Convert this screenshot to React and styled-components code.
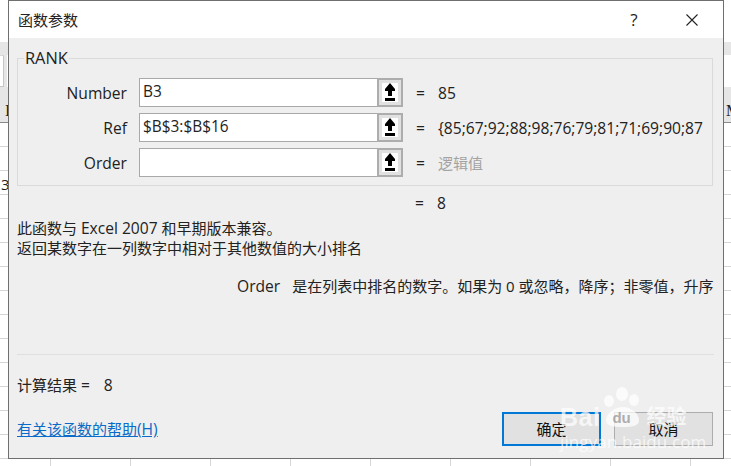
import React from "react";
import styled, { createGlobalStyle } from "styled-components";

const UI_FONT = `"Open Sans", "Noto Sans CJK SC", sans-serif`;

const Global = createGlobalStyle`
  html, body { margin: 0; padding: 0; background: #fff; }
  * { box-sizing: border-box; }
`;

const Page = styled.div`
  position: relative;
  width: 731px;
  height: 466px;
  overflow: hidden;
  background: #fff;
  font-family: ${UI_FONT};
  font-size: 15px;
  color: #111;
`;

const Latin = styled.span`
  font-size: 15.6px;
`;

/* ---------- spreadsheet behind the dialog ---------- */
const Sheet = styled.div`
  display: flex;
  flex-direction: column;
  width: 100%;
  height: 100%;
`;
const SheetTop = styled.div`
  height: 42px;
  flex: none;
`;
const FormulaBar = styled.div`
  height: 45px;
  flex: none;
  display: flex;
  gap: 3px;
  padding-top: 13px;
  background: #e6e6e6;
`;
const NameBox = styled.div`
  width: 4px;
  background: #fff;
  border-right: 1px solid #c6c6c6;
  border-top: 1px solid #d8d8d8;
  border-bottom: 1px solid #c6c6c6;
`;
const FormulaField = styled.div`
  flex: 1;
  background: #fff;
`;
const ColumnHeads = styled.div`
  height: 36px;
  flex: none;
  display: flex;
  justify-content: space-between;
  align-items: flex-end;
  padding: 0 0 2px 5px;
  background: #e6e6e6;
  border-bottom: 1px solid #8a8a8a;
  font: 16px "Liberation Serif", serif;
  color: #222;
`;
const HeadLetter = styled.span`
  width: ${(p) => p.$w}px;
  overflow: hidden;
`;
const SheetRow = styled.div`
  height: 24px;
  flex: none;
  padding: 3px 0 0 1px;
  border-bottom: 1px solid #d6d6d6;
  font-size: 15px;
  line-height: 20px;
  color: #222;
`;
const TickRow = styled.div`
  flex: 1;
  background-image: linear-gradient(to right, #d6d6d6 0 1px, transparent 1px);
  background-size: 80px 100%;
  background-position: 50px 0;
`;

/* ---------- dialog ---------- */
const Dialog = styled.section`
  position: absolute;
  left: 8px;
  top: 0;
  width: 716px;
  height: 459px;
  display: flex;
  flex-direction: column;
  background: #efefef;
  border: 1px solid #6f6f6f;
`;
const TitleBar = styled.header`
  height: 37px;
  flex: none;
  display: flex;
  align-items: center;
  padding: 0 25px 0 9px;
  background: #fff;
`;
const Title = styled.h1`
  flex: 1;
  margin: 0;
  font: 400 15px/20px ${UI_FONT};
  color: #222;
`;
const HelpGlyph = styled.span`
  width: 12px;
  margin-right: 46px;
  font-size: 17px;
  line-height: 20px;
  text-align: center;
  color: #222;
`;
const CloseButton = styled.button`
  width: 12px;
  height: 12px;
  padding: 0;
  display: block;
  border: 0;
  background: none;
`;
const Body = styled.div`
  flex: 1;
  display: flex;
  flex-direction: column;
  padding: 12px 9px 12px 8px;
  min-height: 0;
`;
const ArgsBox = styled.fieldset`
  flex: none;
  margin: 0;
  padding: 12px 8px 7px 0;
  height: 136px;
  width: 696px;
  border: 1px solid #dadada;
  display: grid;
  grid-template-columns: 110px 264px 1fr;
  grid-auto-rows: 29px;
  row-gap: 6px;
  align-content: start;
`;
const Legend = styled.legend`
  margin-left: 6px;
  padding: 0 1px;
  font-size: 16.4px;
  line-height: 16px;
  color: #222;
`;
const ArgLabel = styled.label`
  padding: 1px 1px 0 0;
  text-align: right;
  font-size: 15.6px;
  line-height: 29px;
  color: #222;
`;
const RefField = styled.div`
  margin-left: 11px;
  display: flex;
  border: 1px solid #a9a9a9;
  border-width: 1px 0 1px 1px;
  background: #fff;
  width: 264px;
`;
const FieldText = styled.div`
  flex: 1;
  padding-left: 3px;
  font-size: 15.4px;
  line-height: 26px;
  color: #222;
`;
const PickButton = styled.button`
  flex: none;
  width: 26px;
  margin: -1px 0;
  padding: 3px;
  border: 2px solid #adadad;
  background: #e1e1e1;
  display: flex;
`;
const PickFace = styled.span`
  flex: 1;
  background: #fff;
  display: flex;
  align-items: center;
  justify-content: center;
`;
const Evaluated = styled.div`
  display: flex;
  margin-left: 24px;
  padding-top: 1px;
  font-size: ${(p) => (p.$muted ? "15px" : "15.6px")};
  line-height: 28px;
  color: ${(p) => (p.$muted ? "#a3a3a3" : "#222")};
  white-space: nowrap;
  overflow: hidden;
`;
const Equals = styled.span`
  width: 22px;
  flex: none;
  font-size: 15.6px;
  color: #222;
`;
const ResultLine = styled.div`
  margin: 7px 0 0 398px;
  display: flex;
  font-size: 15.6px;
  line-height: 20px;
  color: #222;
`;
const Description = styled.p`
  margin: 5px 0 0 0;
  line-height: 20px;
  color: #222;
`;
const ArgHelp = styled.div`
  margin: 18px 0 0 220px;
  display: flex;
  gap: 12px;
  width: 478px;
  white-space: nowrap;
  line-height: 20px;
  color: #222;
`;
const Divider = styled.hr`
  width: 697px;
  margin: 58px 0 0 0;
  border: 0;
  border-top: 1px solid #dfdfdf;
`;
const Total = styled.div`
  margin-top: 20px;
  display: flex;
  gap: 14px;
  line-height: 20px;
  color: #222;
`;
const Footer = styled.footer`
  margin-top: auto;
  display: flex;
  align-items: center;
  justify-content: space-between;
  width: 696px;
`;
const HelpLink = styled.a`
  color: #0b6bc8;
  text-decoration: underline;
`;
const Buttons = styled.div`
  display: flex;
  gap: 13px;
`;
const Action = styled.button`
  width: 99px;
  height: 34px;
  padding: 0 0 2px;
  background: #e1e1e1;
  border: ${(p) => (p.$primary ? "2px solid #0078d7" : "1px solid #adadad")};
  font: 15px ${UI_FONT};
  color: #111;
`;

/* ---------- watermark ---------- */
const Watermark = styled.div`
  position: absolute;
  left: 560px;
  top: 386px;
  width: 135px;
  height: 62px;
  color: rgba(255, 255, 255, 0.72);
  pointer-events: none;
`;
const WatermarkRow = styled.div`
  display: flex;
  align-items: flex-end;
  height: 43px;
`;
const WmBai = styled.span`
  margin-bottom: -2px;
  font: 700 25px/28px "Liberation Sans", sans-serif;
  letter-spacing: 0.5px;
`;
const WmPaw = styled.div`
  position: relative;
  width: 46px;
  height: 43px;
  flex: none;
`;
const WmPawArt = styled.svg`
  display: block;
  width: 46px;
  height: 43px;
`;
const WmDu = styled.span`
  position: absolute;
  left: 12px;
  bottom: 2px;
  font: 700 15px/18px "Liberation Sans", sans-serif;
  color: rgba(140, 140, 140, 0.7);
`;
const WmJing = styled.span`
  margin-left: 0;
  font: 700 20px/26px "Noto Sans CJK SC", sans-serif;
`;
const WmDomain = styled.div`
  margin-top: 3px;
  font: 17px/19px "Open Sans", sans-serif;
  letter-spacing: 0.1px;
  white-space: nowrap;
`;

const Arrow = () => (
  <svg width="10" height="19" viewBox="0 0 10 19">
    <path d="M5 0 L10 6 V8 H7 V13 H3 V8 H0 V6 Z M0 15 H10 V18 H0 Z" fill="#000" />
  </svg>
);

const rows = [
  { label: "Number", text: "B3", value: "85" },
  { label: "Ref", text: "$B$3:$B$16", value: "{85;67;92;88;98;76;79;81;71;69;90;87" },
  { label: "Order", text: "", value: "逻辑值", muted: true },
];

export default function App() {
  return (
    <Page>
      <Global />
      <Sheet>
        <SheetTop />
        <FormulaBar>
          <NameBox />
          <FormulaField />
        </FormulaBar>
        <ColumnHeads>
          <HeadLetter $w={4}>I</HeadLetter>
          <HeadLetter $w={5}>M</HeadLetter>
        </ColumnHeads>
        {Array.from({ length: 14 }, (_, i) => (
          <SheetRow key={i}>{i === 2 ? "3" : ""}</SheetRow>
        ))}
        <TickRow />
      </Sheet>

      <Dialog>
        <TitleBar>
          <Title>函数参数</Title>
          <HelpGlyph>?</HelpGlyph>
          <CloseButton aria-label="关闭">
            <svg width="12" height="12" viewBox="0 0 12 12">
              <path d="M0.5 0.5 L11.5 11.5 M11.5 0.5 L0.5 11.5" stroke="#222" strokeWidth="1.1" fill="none" />
            </svg>
          </CloseButton>
        </TitleBar>
        <Body>
          <ArgsBox>
            <Legend>RANK</Legend>
            {rows.map((r) => (
              <React.Fragment key={r.label}>
                <ArgLabel>{r.label}</ArgLabel>
                <RefField>
                  <FieldText>{r.text}</FieldText>
                  <PickButton aria-label="选择">
                    <PickFace>
                      <Arrow />
                    </PickFace>
                  </PickButton>
                </RefField>
                <Evaluated $muted={r.muted}>
                  <Equals>=</Equals>
                  <span>{r.value}</span>
                </Evaluated>
              </React.Fragment>
            ))}
          </ArgsBox>
          <ResultLine>
            <Equals>=</Equals>
            <span>8</span>
          </ResultLine>
          <Description>
            此函数与 <Latin>Excel 2007</Latin> 和早期版本兼容。
            <br />
            返回某数字在一列数字中相对于其他数值的大小排名
          </Description>
          <ArgHelp>
            <Latin>Order</Latin>
            <span>是在列表中排名的数字。如果为 0 或忽略，降序；非零值，升序</span>
          </ArgHelp>
          <Divider />
          <Total>
            <span>计算结果 <Latin>=</Latin></span>
            <Latin>8</Latin>
          </Total>
          <Footer>
            <HelpLink>有关该函数的帮助<Latin>(H)</Latin></HelpLink>
            <Buttons>
              <Action $primary>确定</Action>
              <Action>取消</Action>
            </Buttons>
          </Footer>
        </Body>
      </Dialog>

      <Watermark>
        <WatermarkRow>
          <WmBai>Bai</WmBai>
          <WmPaw>
            <WmPawArt viewBox="0 0 46 43">
              <ellipse cx="9" cy="15" rx="5" ry="6" fill="currentColor" />
              <ellipse cx="22" cy="8" rx="6" ry="7" fill="currentColor" />
              <ellipse cx="34" cy="14" rx="5" ry="6" fill="currentColor" />
              <path d="M23 21 C30 21 39 27 39 34 C39 40 33 41 23 41 C13 41 6 40 6 34 C6 27 16 21 23 21 Z" fill="currentColor" />
            </WmPawArt>
            <WmDu>du</WmDu>
          </WmPaw>
          <WmJing>经验</WmJing>
        </WatermarkRow>
        <WmDomain>jingyan.baidu.com</WmDomain>
      </Watermark>
    </Page>
  );
}
